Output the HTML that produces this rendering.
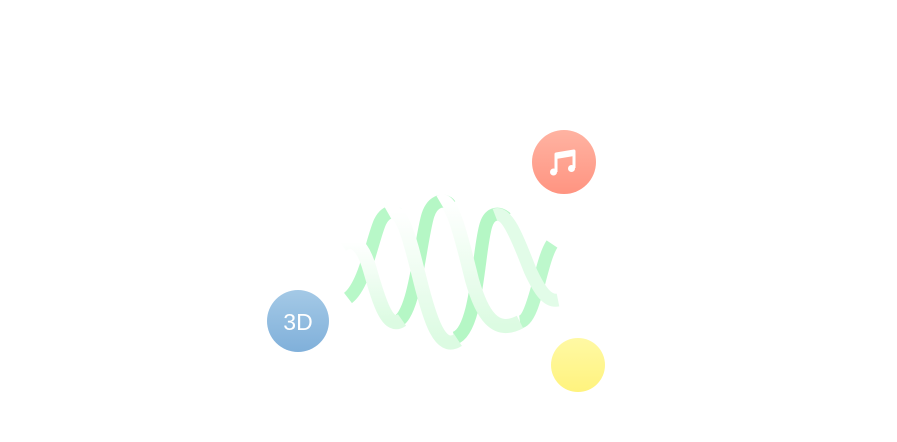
<!DOCTYPE html>
<html><head><style>
html,body{margin:0;padding:0;background:#fff;width:897px;height:442px;overflow:hidden;font-family:"Liberation Sans",sans-serif}
.c{position:absolute;border-radius:50%}
</style></head><body>
<svg width="897" height="442" style="position:absolute;left:0;top:0">
<defs>
<linearGradient id="w" x1="0" y1="0" x2="0" y2="1"><stop offset="0" stop-color="#ffffff"/><stop offset="1" stop-color="#dcfbe2"/></linearGradient>
</defs>
<g fill="none" stroke-linecap="butt" stroke-width="13">
<path d="M348,298 C365,285 372,240 380,222 C385,212 392,210 398,214" stroke="#b8f8c8"/>
<path d="M395,322 C415,320 420,240 428,215 C433,200 445,198 450,205" stroke="#b5f7c5"/>
<path d="M455,338 C478,330 478,250 486,225 C490,212 500,212 506,218" stroke="#b5f7c5"/>
<path d="M520,322 C535,320 540,262 552,244" stroke="#bdf8cc"/>
<path d="M342,245 C352,238 362,242 370,270 C380,305 388,330 402,320" stroke="url(#w)" stroke-width="14"/>
<path d="M388,213 C402,205 410,240 420,280 C430,320 440,352 458,340" stroke="url(#w)" stroke-width="14"/>
<path d="M440,202 C452,195 462,240 472,280 C482,315 495,335 520,322" stroke="url(#w)" stroke-width="14"/>
<path d="M495,215 C508,210 520,245 530,270 C540,292 548,302 558,300" stroke="#e2fce8" stroke-width="13"/>
</g>
</svg>
<div class="c" style="left:532px;top:130px;width:64px;height:64px;background:linear-gradient(#ffb3a2,#ff9481)"></div>
<svg style="position:absolute;left:546px;top:144px" width="36" height="36" viewBox="0 0 36 36">
<path d="M10,28 V10 L28,7 V24" stroke="#fff" stroke-width="3" fill="none" stroke-linejoin="round"/>
<path d="M10,10 L28,7 V12 L10,15Z" fill="#fff"/>
<circle cx="7.5" cy="28" r="3.5" fill="#fff"/><circle cx="25.5" cy="24.5" r="3.5" fill="#fff"/>
</svg>
<div class="c" style="left:267px;top:290px;width:62px;height:62px;background:linear-gradient(#a4c9e6,#80b0da);color:#fff;font-size:23px;line-height:64px;text-align:center">3D</div>
<div class="c" style="left:551px;top:338px;width:54px;height:54px;background:linear-gradient(#fff9a4,#fff37e)"></div>
</body></html>
